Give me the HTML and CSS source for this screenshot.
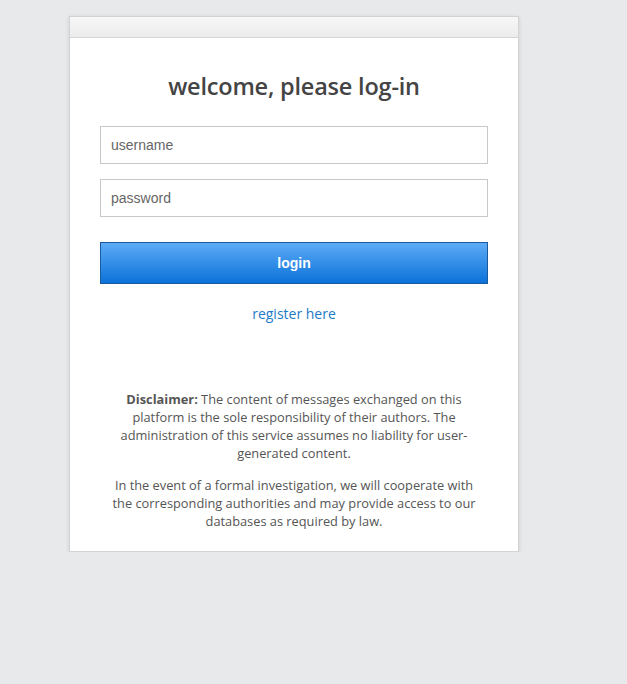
FILE: index.html
```html
<!DOCTYPE html>
<html lang="en">
<head>
  <meta charset="UTF-8">
  <title>Log in</title>
  <link rel="stylesheet" href="styles.css">
</head>
<body>

  <div class="login-box">
    <div class="login-head"></div>

    <div class="login-body">
      <h2>welcome, please log-in</h2>

      <form class="login-form">
        <input type="text" placeholder="username">
        <input type="password" placeholder="password">
        <button type="submit">login</button>
      </form>

      <a class="register" href="#">register here</a>

      <div class="disclaimer">
        <p><b>Disclaimer:</b> The content of messages exchanged on this platform is the sole responsibility of their authors. The administration of this service assumes no liability for user-generated content.</p>
        <p>In the event of a formal investigation, we will cooperate with the corresponding authorities and may provide access to our databases as required by law.</p>
      </div>
    </div>
  </div>

</body>
</html>
```

FILE: styles.css
```css
body {
  margin: 0;
  padding: 16px 0 0 69px;
  background: #e8e9eb;
  font-family: "Open Sans", Arial, sans-serif;
}
.login-box {
  width: 448px;
  background: white;
  border: 1px solid #d2d3d5;
  box-shadow: 0 1px 4px rgba(0,0,0,0.12);
}
.login-head {
  height: 20px;
  background: linear-gradient(#f7f7f7, #ececec);
  border-bottom: 1px solid #d4d4d4;
}
.login-body {
  padding: 32px 30px 21px;
}
h2 {
  margin: 0 0 24px;
  text-align: center;
  font-size: 23.5px;
  font-weight: 600;
  letter-spacing: -0.2px;
  color: #444;
  line-height: 32px;
}
.login-form {
  display: flex;
  flex-direction: column;
}
.login-form input {
  box-sizing: border-box;
  height: 38px;
  margin-bottom: 15px;
  padding: 0 10px;
  border: 1px solid #c8c8c8;
  font-family: "Liberation Sans", Arial, sans-serif;
  font-size: 14px;
  color: #333;
}
.login-form input::placeholder {
  color: #666;
}
button {
  margin-top: 10px;
  height: 42px;
  border: 1px solid #1b5a9c;
  background: linear-gradient(#5dabf6, #0b72d9);
  color: white;
  font-family: "Liberation Sans", Arial, sans-serif;
  font-weight: bold;
  font-size: 14px;
  cursor: pointer;
}
.register {
  display: block;
  margin-top: 20px;
  text-align: center;
  color: #1e7bc8;
  font-size: 14px;
  text-decoration: none;
}
.disclaimer {
  margin-top: 67px;
  padding: 0 8px;
  text-align: center;
  font-size: 12.8px;
  line-height: 18px;
  color: #555;
}
.disclaimer p {
  margin: 0 0 14px;
}
.disclaimer p:last-child {
  margin-bottom: 0;
}
```
